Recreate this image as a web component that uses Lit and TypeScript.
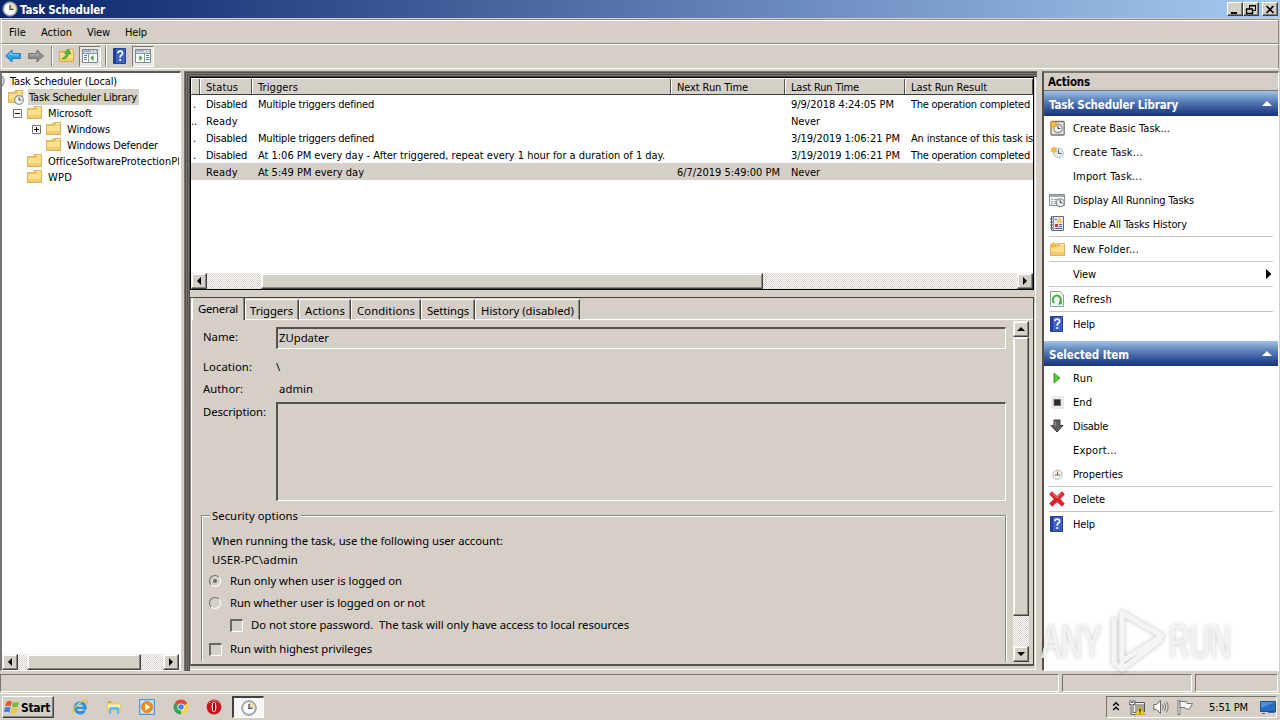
import { LitElement, html, css, svg, nothing } from 'lit';
import { customElement, property } from 'lit/decorators.js';
import { classMap } from 'lit/directives/class-map.js';

const clock = (cx: number, cy: number, r: number) => svg`
  <circle cx=${cx} cy=${cy} r=${r} fill="#eef3f6" stroke="#8d9296" stroke-width="1.2"/>
  <path d="M${cx} ${cy - r * 0.65}V${cy}H${cx + r * 0.55}" fill="none" stroke="#34424e" stroke-width="1"/>`;

const folder = svg`
  <path d="M.5 3.5H6L7.5 1.5H14.5V13.5H.5Z" fill="#edc463" stroke="#d3a548" stroke-width=".8"/>
  <path d="M1 5H9L10.5 3.5H14V13H1Z" fill="#fbdf8d"/>
  <path d="M1 10H14V13H1Z" fill="#f2cd70"/><path d="M10 2.5H13.5" stroke="#fff4cc"/>`;

const helpBook = svg`
  <path d="M1.5 .5H13.5V15.5H1.5Z" fill="#3c62c8" stroke="#27408f"/><path d="M2 1H4V15H2Z" fill="#243f9a"/>
  <path d="M5.8 5.3Q5.9 3.2 8.2 3.2T10.6 5.2Q10.6 6.5 9.3 7.3T8.2 9.6" fill="none" stroke="#fff" stroke-width="1.7"/>
  <circle cx="8.2" cy="12" r="1.1" fill="#fff"/>`;

const star = svg`<path d="M4.5 0L5.8 2.4L8.6 2L7 4.5L8.6 7L5.8 6.6L4.5 9L3.2 6.6L.4 7L2 4.5L.4 2L3.2 2.4Z" fill="#f5a623"/><circle cx="4.5" cy="4.5" r="1.7" fill="#f9c656"/>`;

const pane = svg`
  <path d="M.5 1.5H15.5V14.5H.5Z" fill="#fff" stroke="#7b8794"/><path d="M1 2H15V4.5H1Z" fill="#a9b7c6"/>
  <path d="M1 5.5H15" stroke="#8996a5"/><path d="M12 3H14M9 3H11" stroke="#fff"/>`;

const icons: Record<string, unknown> = {
  app: svg`<circle cx="8" cy="8" r="7.2" fill="#c4c7cb" stroke="#82888e"/><circle cx="8" cy="8" r="5.6" fill="#fafcfd"/>
    <path d="M8 2.4A5.6 5.6 0 0 1 13.6 8H8Z" fill="#f7d9a0"/><path d="M8 4V8.4H11.5" fill="none" stroke="#3f4a55" stroke-width="1.3"/>`,
  back: svg`<path d="M.7 8L7 2V5.6H15.3V10.4H7V14Z" fill="#2ea3e6" stroke="#1673b4"/><path d="M3 7.3L6.2 4.5V6.8H14" fill="none" stroke="#8fd4f8"/>`,
  forward: svg`<path d="M15.3 8L9 2V5.6H.7V10.4H9V14Z" fill="#8f8f8f" stroke="#6d6d6d"/><path d="M2 6.8H10V4.8" fill="none" stroke="#b9b9b9"/>`,
  up: svg`${folder}<path d="M3.5 10Q6.5 9.5 7.3 5.5L5.2 5.2L9.6 1L12 6.2L9.8 5.7Q8.5 11 3.5 11Z" fill="#4db82e" stroke="#2e8a1b" stroke-width=".5"/>`,
  paneLeft: svg`${pane}<path d="M2 7.5H5M2 9.5H5M2 11.5H5" stroke="#4d7cb4"/><path d="M6.5 6V14" stroke="#8996a5"/><path d="M11.5 7V13L8.3 10Z" fill="#36a127"/>`,
  paneRight: svg`${pane}<path d="M11 7.5H14M11 9.5H14M11 11.5H14" stroke="#4d7cb4"/><path d="M9.5 6V14" stroke="#8996a5"/><path d="M4.3 7V13L7.5 10Z" fill="#36a127"/>`,
  help: helpBook,
  folder,
  library: svg`${folder}${clock(11, 11, 4.4)}`,
  createBasic: svg`<rect x="2" y="1.5" width="13.2" height="13.5" rx="1" fill="#e9e6e0" stroke="#77706c" stroke-width="1.3"/>${clock(9, 8.5, 4.2)}${star}`,
  create: svg`<circle cx="9.5" cy="9" r="4.8" fill="#e3ecf3" stroke="#b3bfc8"/><path d="M9.5 5.5V9.5H12.5" fill="none" stroke="#4a6076"/><g transform="translate(1 2) scale(.85)">${star}</g>`,
  running: svg`<path d="M.5 2.5H15.5V13.5H.5Z" fill="#f3f5f6" stroke="#84908f"/><path d="M1 3H15V5H1Z" fill="#9eabb0"/>
    <path d="M2 7.5H4M5 7.5H9M2 9.5H4M5 9.5H8M2 11.5H4M5 11.5H8" stroke="#8fa0a5"/>${clock(11.3, 10.7, 3.9)}`,
  history: svg`<path d="M2.5 .5H14.5V14.5H2.5Z" fill="#e4e9f3" stroke="#61697c"/><path d="M4.5 1V14" stroke="#8a92a5"/>
    <path d="M1 3H4M1 6H4M1 9H4M1 12H4" stroke="#555"/><path d="M10.5 1.5L13.5 6.5H7.5Z" fill="#f5ca2a"/><path d="M6 8H9V11H6Z" fill="#c83a3a"/>
    <path d="M10 8.5H13M10 10.5H13M6 12.5H13M6 3.5H8" stroke="#4b62a8"/>`,
  newFolder: svg`<g transform="translate(1 1)">${folder}</g><g transform="translate(1 1) scale(.75)">${star}</g>`,
  refresh: svg`<path d="M1.5 .5H11L14.5 4V15.5H1.5Z" fill="#f7fbf6" stroke="#85a28b"/>
    <path d="M5.4 11.8A4 4 0 1 1 10.6 11.5" fill="none" stroke="#42ab48" stroke-width="2"/><path d="M12.8 9.2V13.5H8.3Z" fill="#42ab48"/>`,
  run: svg`<path d="M5 3L11 8L5 13Z" fill="#4fc936" stroke="#39a427"/>`,
  end: svg`<path d="M2 2H15V15H2Z" fill="#e9e9e9"/><path d="M5 5.5H11.5V11.5H5Z" fill="#2b2b2b" stroke="#666" stroke-width=".8"/>`,
  disable: svg`<path d="M5 2H11V7.5H14L8 14L2 7.5H5Z" fill="#5e5e5e" stroke="#3d3d3d"/><path d="M6.2 3V8.5" stroke="#999"/>`,
  properties: svg`<circle cx="8.5" cy="8.7" r="4.6" fill="#f1f2ee" stroke="#a9b6ba"/><path d="M8.5 5.5V9H11.2M6 9H8" fill="none" stroke="#77603e"/>`,
  delete: svg`<path d="M3 .7L8 5.4L12.7 .7L15.4 3.2L10.8 8L15.4 12.8L13 15.3L8 10.7L3.2 15.3L.6 12.8L5.2 8L.6 3.2Z" fill="#e2202a" stroke="#b5121b" stroke-width=".7"/>
    <path d="M3 2L8 6.8L12.7 2" fill="none" stroke="#f6868a"/>`,
  start: svg`<path d="M2.5 3Q5 1 7.8 2.5L6.8 7.3Q4.5 6 1.3 7.4Z" fill="#e8572a"/><path d="M9 3Q12 4.2 15 2.6L13.8 7.5Q11 9 8 7.7Z" fill="#7cb93a"/>
    <path d="M1 8.6Q4 7.2 6.5 8.6L5.5 13.4Q3 12 0 13.3Z" fill="#3d82d4"/><path d="M7.7 9Q10.5 10.2 13.5 8.8L12.4 13.5Q9.5 15 6.6 13.6Z" fill="#f8c228"/>`,
  ie: svg`<circle cx="8.2" cy="8.8" r="5" fill="none" stroke="#2b8fe0" stroke-width="3.2"/><path d="M3 8.8H13.5" stroke="#2b8fe0" stroke-width="2.2"/>
    <path d="M9 10.7H16V12.5Z" fill="#d4d0c8"/><path d="M1.5 14.5Q-.5 11 6 5.2T15 1.7Q16 3 13.8 6" fill="none" stroke="#edc23b" stroke-width="1.4"/><path d="M4.3 6.7Q6 3.8 9 3.8" fill="none" stroke="#9edcff"/>`,
  explorer: svg`<path d="M1 2H6L7 4H15V13H1Z" fill="#eccb66"/><path d="M2 5.5H14V9H2Z" fill="#fff2ba"/><path d="M2 3H5" stroke="#58a83e"/>
    <path d="M3 15V10Q3 8 5 8H11Q13.5 8 13.5 10V15H11V11H5.5V15Z" fill="#64b4e4" stroke="#9bd3ef" stroke-width=".6"/>`,
  player: svg`<path d="M.5 .5H15.5V15.5H.5Z" fill="#a8d0f0" stroke="#4f98d4"/><path d="M2 2H14V14H2Z" fill="#d2e7f8"/><circle cx="8" cy="8" r="5.6" fill="#f18a1c" stroke="#c96a0c" stroke-width=".6"/><path d="M6.3 4.6L11.4 8L6.3 11.4Z" fill="#fff"/>`,
  chrome: svg`<path d="M8 8L1.6 4.3A7.3 7.3 0 0 1 14.4 4.5Z" fill="#dd4b3e"/><path d="M8 8L14.4 4.5A7.3 7.3 0 0 1 8 15.3Z" fill="#fbd23c"/>
    <path d="M8 8V15.3A7.3 7.3 0 0 1 1.6 4.3Z" fill="#35a452"/><circle cx="8" cy="8" r="3.6" fill="#fff"/><circle cx="8" cy="8" r="2.8" fill="#4285e8"/>`,
  opera: svg`<circle cx="8" cy="8" r="7.4" fill="#c8141c"/><path d="M3 4Q8-1 13 4" fill="none" stroke="#ec6a70"/><ellipse cx="8" cy="8" rx="2.3" ry="5" fill="#fff"/><ellipse cx="8" cy="8" rx="1.2" ry="4.4" fill="#8b0b12"/>`,
  chevrons: svg`<path d="M5.2 6.5L8 3.7L10.8 6.5M5.2 11L8 8.2L10.8 11" fill="none" stroke="#000" stroke-width="1.5"/>`,
  network: svg`<path d="M5.5 4.5H15.5V13.5H5.5Z" fill="#a5a5a2" stroke="#f2f2f2"/><path d="M5 3.5H15.5V13" fill="none" stroke="#555"/>
    <path d="M1 1V4.5H5V1M3 4.5V14.5H7" fill="none" stroke="#444" stroke-width="2.6"/><path d="M1 1V4.5H5V1M3 4.5V14.5H7" fill="none" stroke="#fff" stroke-width="1"/>
    <path d="M11 7L15.8 15.5H6.2Z" fill="#f4d21e" stroke="#a88b0a" stroke-width=".6"/><path d="M11 9.7V12.7M11 13.4V14.6" stroke="#000" stroke-width="1.2"/>`,
  speaker: svg`<path d="M.8 5.5H3.5L7.5 1.5V14.5L3.5 10.5H.8Z" fill="#fff" stroke="#666"/><path d="M9.5 5.5Q11 8 9.5 10.5M11.5 4Q13.8 8 11.5 12M13.5 2.5Q16.8 8 13.5 13.5" fill="none" stroke="#777"/>`,
  flag: svg`<path d="M1 1.5H3V15.5H1Z" fill="#fff" stroke="#555" stroke-width=".8"/><path d="M3 2.5H9L10 4.5H15.5L12.5 10H9L8 8.5H3Z" fill="#fff" stroke="#666" stroke-width=".9"/>`,
  desktop: svg`<path d="M.5 2.5H15.5V12.5H.5Z" fill="#2a6cc4" stroke="#1c4f92"/><path d="M1 3H15L1 9Z" fill="#4a92e0"/><path d="M2 14.5H5M8 13.5H15" stroke="#3a6ea8"/>`,
};

const icon = (name: string) => html`<svg class="icon" viewBox="0 0 16 16" width="16" height="16">${icons[name] ?? nothing}</svg>`;

// Spreads its label over the given width, so the metrics don't depend on the font found.
@customElement('fit-text')
export class FitText extends LitElement {
  static styles = css`
    :host { display: inline-block; white-space: pre; flex: none; padding-top: var(--drop, 1px); margin-bottom: calc(-1 * var(--drop, 1px)); }
  `;

  @property() text = '';
  @property({ type: Number }) width = 0;

  render() {
    return html`<span>${this.text}</span>`;
  }

  updated() {
    const span = this.renderRoot.querySelector('span')!;
    span.style.letterSpacing = '0';
    const natural = span.getBoundingClientRect().width;
    span.style.letterSpacing = `${(this.width - natural) / this.text.length}px`;
  }
}

const t = (text: string, width: number) => html`<fit-text .text=${text} .width=${width}></fit-text>`;

@customElement('scroll-bar')
export class ScrollBar extends LitElement {
  static styles = css`
    :host { display: flex; flex: none; height: 16px; background: repeating-conic-gradient(#fff 0 25%, #d4d0c8 0 50%) 0 0 / 2px 2px; }
    :host([vertical]) { flex-direction: column; width: 16px; height: auto; }
    .button, .thumb {
      box-sizing: border-box; flex: none; background: #d4d0c8;
      border: 1px solid; border-color: #f4f2ee #404040 #404040 #f4f2ee;
      box-shadow: inset -1px -1px #8a8680, inset 1px 1px #fff;
    }
    .button { width: 16px; height: 16px; display: flex; align-items: center; justify-content: center; }
    .rest { flex: 1; }
  `;

  @property({ type: Boolean, reflect: true }) vertical = false;
  @property({ type: Number }) offset = 0;
  @property({ type: Number }) size = 0;

  render() {
    const [first, last] = this.vertical ? ['M0 6L4 2L8 6Z', 'M0 2L4 6L8 2Z'] : ['M6 0L2 4L6 8Z', 'M2 0L6 4L2 8Z'];
    const side = this.vertical ? 'height' : 'width';
    return html`
      <div class="button"><svg width="8" height="8"><path d=${first}/></svg></div>
      <div style="${side}:${this.offset}px"></div>
      <div class="thumb" style="${side}:${this.size}px"></div>
      <div class="rest"></div>
      <div class="button"><svg width="8" height="8"><path d=${last}/></svg></div>
    `;
  }
}

type Cell = [string, number] | null;

const columns: Cell[] = [null, ['Status', 32], ['Triggers', 40], ['Next Run Time', 71], ['Last Run Time', 68], ['Last Run Result', 76]];

const disabled: Cell = ['Disabled', 41];
const multiple: Cell = ['Multiple triggers defined', 116];
const completed: Cell = ['The operation completed', 119];
const tasks: Cell[][] = [
  [['.', 3], disabled, multiple, null, ['9/9/2018 4:24:05 PM', 103], completed],
  [['..', 6], ['Ready', 32], null, null, ['Never', 29], null],
  [['.', 3], disabled, multiple, null, ['3/19/2019 1:06:21 PM', 109], ['An instance of this task is', 122]],
  [['.', 3], disabled, ['At 1:06 PM every day - After triggered, repeat every 1 hour for a duration of 1 day.', 407], null, ['3/19/2019 1:06:21 PM', 109], completed],
  [null, ['Ready', 32], ['At 5:49 PM every day', 106], ['6/7/2019 5:49:00 PM', 103], ['Never', 29], null],
];

const tree = [
  { label: 'Task Scheduler (Local)', width: 107, depth: 0, icon: 'app' },
  { label: 'Task Scheduler Library', width: 108, depth: 1, icon: 'library', selected: true },
  { label: 'Microsoft', width: 44, depth: 2, icon: 'folder', expander: '-' },
  { label: 'Windows', width: 43, depth: 3, icon: 'folder', expander: '+' },
  { label: 'Windows Defender', width: 91, depth: 3, icon: 'folder' },
  { label: 'OfficeSoftwareProtectionPlatform', width: 165, depth: 2, icon: 'folder' },
  { label: 'WPD', width: 24, depth: 2, icon: 'folder' },
];

type Action = [string, number, string, string?];

const libraryActions: Action[] = [
  ['Create Basic Task...', 97, 'createBasic'],
  ['Create Task...', 70, 'create'],
  ['Import Task...', 69, ''],
  ['Display All Running Tasks', 121, 'running'],
  ['Enable All Tasks History', 114, 'history'],
  ['New Folder...', 66, 'newFolder', 'sep'],
  ['View', 23, '', 'sep'],
  ['Refresh', 39, 'refresh', 'sep'],
  ['Help', 22, 'help', 'sep'],
];

const itemActions: Action[] = [
  ['Run', 20, 'run'],
  ['End', 19, 'end'],
  ['Disable', 35, 'disable'],
  ['Export...', 44, ''],
  ['Properties', 50, 'properties'],
  ['Delete', 32, 'delete', 'sep'],
  ['Help', 22, 'help', 'sep'],
];

const tabs: [string, number, number][] = [
  ['Triggers', 43, 54],
  ['Actions', 40, 52],
  ['Conditions', 58, 70],
  ['Settings', 42, 54],
  ['History (disabled)', 93, 105],
];

@customElement('app-root')
export class AppRoot extends LitElement {
  static styles = css`
    :host {
      display: flex; flex-direction: column; position: relative;
      width: 1280px; height: 720px; overflow: hidden;
      background: #d5cfc8; color: #000;
      font: 11px/16px "DejaVu Sans Condensed", "DejaVu Sans", sans-serif;
    }
    * { box-sizing: border-box; }
    .icon { flex: none; display: block; }

    .title { flex: none; height: 18px; padding: 0 2px; display: flex; align-items: center; gap: 2px; background: linear-gradient(90deg, #0a246a, #a6caf0); color: #fff; font-weight: bold; font-size: 11.5px; }
    .title fit-text { flex: 1; }
    .winbtn { width: 16px; height: 14px; background: #d4d0c8; border: 1px solid; border-color: #fff #404040 #404040 #fff; box-shadow: inset -1px -1px #808080; display: flex; align-items: center; justify-content: center; margin-left: -2px; }
    .winbtn.close { margin-left: 1px; }

    .menu { flex: none; height: 25px; margin: 1px 1px 0; padding: 0 7px; display: flex; align-items: center; gap: 15px; border: 1px solid; border-color: #8b8781 #8b8781 #8b8781 #fff; box-shadow: inset 0 1px #fff; }
    .toolbar { flex: none; height: 25px; margin: 0 1px; padding: 0 3px 1px; display: flex; align-items: center; border: 1px solid; border-color: #fff #8b8781 #fff #fff; }
    .toolbar .gap { width: 7px; }
    .toolbar .gap.near { width: 4px; }
    .toolbar .sep { width: 2px; height: 20px; border-left: 1px solid #8b8781; border-right: 1px solid #fff; margin: 0 6px 0 7px; }
    .toolbar .sep.near { margin: 0 5px 0 4px; }
    .pressed { width: 22px; height: 21px; display: flex; align-items: center; justify-content: center; background: #eae7e3; border: 1px solid; border-color: #7c7873 #fff #fff #7c7873; }

    .main { flex: none; height: 600px; margin-top: 2px; display: flex; }
    .tree { width: 181px; border: solid; border-width: 2px 1px 1px 2px; border-color: #5b5853 #fff #fff #77736e; padding-right: 1px; background: #fff; display: flex; flex-direction: column; overflow: hidden; }
    .nodes { flex: 1; overflow: hidden; }
    .node { height: 16px; display: flex; align-items: center; }
    .expander { width: 9px; height: 9px; flex: none; margin-right: 5px; }
    .node .icon { margin-right: 4px; }
    .node .label { height: 16px; padding: 0 1px; flex: none; }
    .node .label.selected { background: #d4d0c8; padding-right: 2px; }

    .frame {
      width: 853px; margin-left: 3px; padding: 6px 3px 5px 6px; display: flex; flex-direction: column;
      box-shadow: inset 1px 1px #77736e, inset 2px 2px #55524e, inset 3px 3px #77736e, inset 4px 4px #55524e, inset 5px 5px #77736e, inset 6px 6px #4a4744,
        inset -1px -1px #d5cfc8, inset -2px -2px #fff;
    }
    .list { flex: none; height: 213px; background: #fff; border: 1px solid #000; display: flex; flex-direction: column; overflow: hidden; }
    .line { display: grid; grid-template-columns: 9px 52px 419px 114px 120px 128px; height: 17px; line-height: 17px; overflow: hidden; flex: none; }
    .line.selected { background: #d4d0c8; }
    .cell { padding-left: 6px; overflow: hidden; }
    .cell:first-child { padding-left: 2px; }
    .line:nth-child(3) .cell:first-child { padding-left: 0; }
    .head .cell { background: #d4d0c8; height: 17px; border-bottom: 1px solid #404040; box-shadow: inset 0 1px #fff, inset 1px 0 #fff, inset -1px 0 #55524e; line-height: 17px; }
    .list .rest { flex: 1; }

    .details {
      --drop: 0px;
      flex: 1; margin-top: 7px; border: solid; border-width: 1px 1px 2px; border-color: #44413e #44413e #55524e #8b8781; box-shadow: inset 1px 0 #fff;
      font: 11.3px/16px "Noto Sans", "Open Sans", sans-serif; display: flex; flex-direction: column; overflow: hidden;
    }
    .tabs { height: 22px; flex: none; display: flex; align-items: flex-end; padding-left: 1px; }
    .tab { height: 21px; padding: 3px 0 0 6px; border-top: 1px solid #fff; border-right: 1px solid #44413e; border-bottom: 1px solid #fff; box-shadow: inset -1px 0 #8b8781, inset 1px 0 #fff; }
    .tab.active { height: 22px; width: 53px; border-bottom: 0; border-top: 0; }
    .tab.active + .tab { padding-left: 5px; }
    .tabs .rest { flex: 1; border-bottom: 1px solid #fff; }
    .page { flex: 1; display: flex; overflow: hidden; padding: 1px 4px 2px 0; }
    .form { width: 815px; margin-right: 7px; display: flex; flex-direction: column; }
    .row { display: flex; flex: none; padding-left: 12px; }
    .row .name { width: 73px; flex: none; }
    .name.low { padding-top: 2px; }
    .sunken { border: solid; border-width: 2px 1px 1px 2px; border-color: #55524e #fff #fff #55524e; width: 730px; padding: 1px 0 0 1px; }
    .group { flex: 1; margin: 7px 0 0 10px; display: flex; flex-direction: column; }
    .legend { display: flex; height: 16px; align-items: center; flex: none; }
    .legend::before, .legend::after { content: ""; height: 8px; align-self: flex-end; border-top: 1px solid #8b8781; border-left: 1px solid #8b8781; box-shadow: inset 1px 1px #fff; width: 8px; }
    .legend::after { flex: 1; border-left: 0; border-right: 1px solid #8b8781; box-shadow: inset 0 1px #fff, 1px 0 #fff; }
    .legend fit-text { margin: 0 3px 0 2px; }
    .options { flex: 1; border: solid #8b8781; border-width: 0 1px; box-shadow: inset 1px 0 #fff, 1px 0 #fff; padding-left: 10px; display: flex; flex-direction: column; }
    .options > * { flex: none; }
    .option { display: flex; align-items: center; gap: 9px; margin-left: -3px; height: 16px; }
    .radio { width: 12px; height: 12px; border-radius: 50%; border: 1.5px solid; border-color: #6f6b66 #fff #fff #6f6b66; display: flex; align-items: center; justify-content: center; }
    .radio.on::after { content: ""; width: 4px; height: 4px; border-radius: 50%; background: #6f6b66; }
    .check { width: 13px; height: 13px; border: solid; border-width: 2px 1px 1px 2px; border-color: #6a6661 #fff #fff #6a6661; }
    .option.box { gap: 8px; }

    .side { width: 237px; margin-left: 5px; border: solid; border-width: 2px 1px 1px 2px; border-color: #77736e #fff #fff #55524e; background: #fff; }
    .side .caption { height: 18px; padding: 0 0 0 4px; background: #d5cfc8; border-bottom: 1px solid #77736e; font-weight: bold; font-size: 11.5px; }
    .section { height: 25px; padding: 0 6px 0 5px; display: flex; align-items: center; justify-content: space-between; background: linear-gradient(#a0c2ea, #6287bd 35%, #2a4a90 80%, #16327a); color: #fff; font-weight: bold; font-size: 11.5px; }
    .action { height: 24px; padding: 0 5px; display: flex; align-items: center; gap: 8px; }
    .arrow { margin-left: auto; margin-right: -1px; }
    .rule { height: 1px; margin: 0 5px; background: #c5c5c5; }
    .space { height: 5px; }

    .status { flex: none; height: 19px; margin-top: 3px; padding: 0 2px 1px 0; display: flex; gap: 3px; }
    .status div { border: 1px solid; border-color: #77736e #fff #fff #77736e; }
    .status .wide { width: 1059px; }
    .status .mid { width: 130px; }
    .status .last { flex: 1; }

    .taskbar { flex: 1; border-top: 1px solid #fff; padding: 2px 3px 2px 2px; display: flex; align-items: center; }
    .start { width: 52px; height: 22px; padding-left: 1px; display: flex; align-items: center; gap: 1px; font-weight: bold; font-size: 12px; background: #d4d0c8; border: 1px solid; border-color: #fff #404040 #404040 #fff; box-shadow: inset -1px -1px #808080; }
    .pins { display: flex; gap: 17.6px; margin: 0 10px 0 18px; }
    .task { width: 32px; height: 22px; display: flex; align-items: center; justify-content: center; background: #f6f5f3; border: solid; border-width: 2px 1px 1px 2px; border-color: #404040 #fff #fff #404040; }
    .tray { width: 171px; height: 22px; margin-left: auto; padding: 0 0 0 1px; display: flex; align-items: center; border: 1px solid; border-color: #77736e #fff #fff #77736e; }
    .tray .icon + .icon { margin-left: 8px; }
    .tray .icon:first-child + .icon { margin-left: 5px; }
    .tray fit-text { margin: 0 12px 0 16px; }

    .watermark { position: absolute; left: 1036px; top: 604px; filter: drop-shadow(0 0 2px rgba(0, 0, 0, .25)); font-family: "Liberation Sans Narrow", "Liberation Sans", sans-serif; }
  `;

  private action([label, width, name, sep]: Action) {
    return html`
      ${sep ? html`<div class="rule"></div>` : nothing}
      <div class="action">
        ${icon(name)}${t(label, width)}
        ${label === 'View' ? html`<svg class="arrow" width="9" height="12"><path d="M1 1L6.5 6L1 11Z"/></svg>` : nothing}
      </div>`;
  }

  private section(label: string, width: number) {
    return html`<div class="section">${t(label, width)}<svg width="10" height="5"><path d="M0 5L5 0L10 5Z" fill="#fff"/></svg></div>`;
  }

  private node(n: any) {
    return html`
      <div class="node" style="margin-left:${n.depth * 19 - 27}px">
        <svg class="expander" viewBox="0 0 9 9">
          ${n.expander ? svg`<path d="M.5 .5H8.5V8.5H.5Z" fill="#fff" stroke="#77736e"/><path d="M2 4.5H7" stroke="#000"/>` : nothing}
          ${n.expander === '+' ? svg`<path d="M4.5 2V7" stroke="#000"/>` : nothing}
        </svg>
        ${icon(n.icon)}
        <div class=${classMap({ label: true, selected: !!n.selected })}>${t(n.label, n.width)}</div>
      </div>`;
  }

  private line(cells: Cell[], kind = '') {
    return html`<div class="line ${kind}">${cells.map(c => html`<div class="cell">${c ? t(...c) : nothing}</div>`)}</div>`;
  }

  render() {
    return html`
      <div class="title">
        ${icon('app')}${t('Task Scheduler', 85)}
        <div class="winbtn"><svg width="12" height="11"><path d="M2 8H8V10H2Z"/></svg></div>
        <div class="winbtn"><svg width="12" height="11"><path d="M4.5 5V2H10.5V6.5H8M4 1.5H11" fill="none" stroke="#000"/><path d="M1.5 5V9.5H7.5V5M1 5H8" fill="none" stroke="#000" stroke-width="1.3"/></svg></div>
        <div class="winbtn close"><svg width="12" height="11"><path d="M2.5 2L9.5 9M9.5 2L2.5 9" stroke="#000" stroke-width="1.6"/></svg></div>
      </div>
      <div class="menu">${t('File', 17)}${t('Action', 31)}${t('View', 23)}${t('Help', 22)}</div>
      <div class="toolbar">
        ${icon('back')}<div class="gap"></div>${icon('forward')}<div class="sep"></div>
        ${icon('up')}<div class="gap near"></div><div class="pressed">${icon('paneLeft')}</div><div class="sep near"></div>
        ${icon('help')}<div class="gap near"></div><div class="pressed">${icon('paneRight')}</div>
      </div>

      <div class="main">
        <div class="tree">
          <div class="nodes">${tree.map(n => this.node(n))}</div>
          <scroll-bar .offset=${9} .size=${114}></scroll-bar>
        </div>

        <div class="frame">
          <div class="list">
            ${this.line(columns, 'head')}
            ${tasks.map((row, i) => this.line(row, i === 4 ? 'selected' : ''))}
            <div class="rest"></div>
            <scroll-bar .offset=${54} .size=${502}></scroll-bar>
          </div>

          <div class="details">
            <div class="tabs">
              <div class="tab active">${t('General', 40)}</div>
              ${tabs.map(([label, w, full]) => html`<div class="tab" style="width:${full}px">${t(label, w)}</div>`)}
              <div class="rest"></div>
            </div>
            <div class="page">
              <div class="form">
                <div class="row" style="height:28px;padding-top:6px">
                  <div class="name low">${t('Name:', 35)}</div><div class="sunken">${t('ZUpdater', 50)}</div>
                </div>
                <div class="row" style="height:22px;margin-top:10px"><div class="name">${t('Location:', 49)}</div>${t('\\', 5)}</div>
                <div class="row" style="height:21px"><div class="name">${t('Author:', 40)}</div>${t(' admin', 37)}</div>
                <div class="row" style="height:99px"><div class="name low">${t('Description:', 63)}</div><div class="sunken"></div></div>
                <div class="group">
                  <div class="legend">${t('Security options', 86)}</div>
                  <div class="options">
                    <div style="margin-top:9px">${t('When running the task, use the following user account:', 291)}</div>
                    <div style="margin-top:3px">${t('USER-PC\\admin', 86)}</div>
                    <div class="option" style="margin-top:5px"><div class="radio on"></div>${t('Run only when user is logged on', 172)}</div>
                    <div class="option" style="margin-top:6px"><div class="radio"></div>${t('Run whether user is logged on or not', 195)}</div>
                    <div class="option box" style="margin-top:6px;padding-left:21px"><div class="check"></div>${t('Do not store password.  The task will only have access to local resources', 378)}</div>
                    <div class="option box" style="margin-top:8px"><div class="check"></div>${t('Run with highest privileges', 142)}</div>
                  </div>
                </div>
              </div>
              <scroll-bar vertical .offset=${0} .size=${279}></scroll-bar>
            </div>
          </div>
        </div>

        <div class="side">
          <div class="caption">${t('Actions', 42)}</div>
          ${this.section('Task Scheduler Library', 129)}
          ${libraryActions.map(a => this.action(a))}
          <div class="space"></div>
          ${this.section('Selected Item', 80)}
          ${itemActions.map(a => this.action(a))}
        </div>
      </div>

      <div class="status"><div class="wide"></div><div class="mid"></div><div class="last"></div></div>

      <div class="taskbar">
        <div class="start">${icon('start')}${t('Start', 29)}</div>
        <div class="pins">${['ie', 'explorer', 'player', 'chrome', 'opera'].map(icon)}</div>
        <div class="task">${icon('app')}</div>
        <div class="tray">
          ${icon('chevrons')}${icon('network')}${icon('speaker')}${icon('flag')}${t('5:51 PM', 39)}${icon('desktop')}
        </div>
      </div>

      <svg class="watermark" width="204" height="76" fill="#f4f4f4" fill-opacity=".85">
        <text x="5" y="54" font-size="48" textLength="61" lengthAdjust="spacingAndGlyphs">ANY</text>
        <text x="133" y="54" font-size="48" textLength="62" lengthAdjust="spacingAndGlyphs">RUN</text>
        <path d="M86 9L126 32L86 57Z M86 9V65L126 35M78 14V59L86 65" fill="none" stroke="#f4f4f4" stroke-width="5" stroke-linejoin="round"/>
      </svg>
    `;
  }
}
